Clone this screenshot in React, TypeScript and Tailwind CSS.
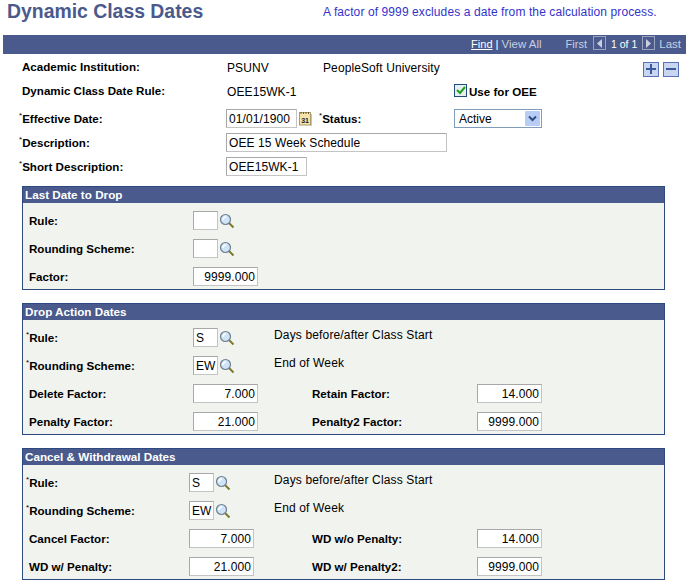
import type { ReactNode } from 'react'

function Lookup() {
  return (
    <svg width="16" height="16" viewBox="0 0 16 16" className="shrink-0">
      <line x1="10" y1="10" x2="14.5" y2="14.5" stroke="#7d7a2c" strokeWidth="2" />
      <circle cx="6.5" cy="6.5" r="5" fill="#cfe4f7" stroke="#6f7f8f" strokeWidth="1.2" />
      <path d="M4 7 A3 3 0 0 1 7 4" fill="none" stroke="#ffffff" strokeWidth="1.4" />
    </svg>
  )
}

function CalendarIcon() {
  return (
    <svg width="13" height="15" viewBox="0 0 13 15" className="shrink-0">
      <rect x="0.5" y="1.5" width="11" height="12.5" fill="#f5e3ac" stroke="#a89a6a" />
      <line x1="12.5" y1="3" x2="12.5" y2="15" stroke="#c8c4b0" />
      <path d="M2 1V3M4.5 1V3M7 1V3M9.500 1V3" stroke="#6b5a2a" />
      <text x="2.2" y="11.500" fontSize="7" fontWeight="700" fill="#222" fontFamily="Liberation Sans, sans-serif">31</text>
    </svg>
  )
}

function Field({ value = '', className, right }: { value?: string; className: string; right?: boolean }) {
  return (
    <div
      className={`h-[19px] shrink-0 bg-white border border-[#c4c4c4] border-t-[#a8a8a8] border-l-[#a8a8a8] px-[2px] flex items-center text-[12px] tracking-[0.1px] text-black whitespace-nowrap overflow-hidden ${right ? 'justify-end' : ''} ${className}`}
    >
      {value}
    </div>
  )
}

function Label({ children, className = '' }: { children: ReactNode; className?: string }) {
  return <div className={`shrink-0 font-bold text-[11.6px] text-black whitespace-nowrap ${className}`}>{children}</div>
}

function Req({ children, className = '' }: { children: ReactNode; className?: string }) {
  return (
    <Label className={className}>
      <span className="font-normal text-[8px] align-top">*</span>
      {children}
    </Label>
  )
}

function Section({ title, children, className = '' }: { title: string; children: ReactNode; className?: string }) {
  return (
    <section className={`ml-[22px] w-[643px] border border-[#2c4a80] bg-[#f1f3ef] ${className}`}>
      <h2 className="h-[16px] bg-[#4a5a8c] pl-[2px] text-[11.7px] leading-[16px] font-bold text-white">{title}</h2>
      <div className="flex flex-col gap-[9px] pt-[8px] pb-[3px] pl-[6px]">{children}</div>
    </section>
  )
}

function Row({ children }: { children: ReactNode }) {
  return <div className="h-[19px] flex items-center">{children}</div>
}

function LookupRow({ label, value, required, labelClass, descClass = '', desc }: { label: string; value?: string; required?: boolean; labelClass: string; descClass?: string; desc?: string }) {
  return (
    <Row>
      {required ? <Req className={labelClass}>{label}</Req> : <Label className={labelClass}>{label}</Label>}
      <Field value={value} className="w-[25px]" />
      <div className="ml-[1px]"><Lookup /></div>
      {desc && <div className={`-mt-[6px] text-[12px] tracking-[0.15px] whitespace-nowrap ${descClass}`}>{desc}</div>}
    </Row>
  )
}

function FactorRow({ left, leftValue, right, rightValue, leftClass, rightClass }: { left: string; leftValue: string; right: string; rightValue: string; leftClass: string; rightClass: string }) {
  return (
    <Row>
      <Label className={leftClass}>{left}</Label>
      <Field value={leftValue} right className="w-[65px]" />
      <Label className={rightClass}>{right}</Label>
      <Field value={rightValue} right className="w-[65px]" />
    </Row>
  )
}

export default function App() {
  return (
    <div className="w-[690px] h-[586px] bg-white overflow-hidden text-[12px] text-black font-['Liberation_Sans',Arial,sans-serif]">
      <div className="h-[35px] flex pl-[7px]">
        <h1 className="w-[316px] text-[19.400px] leading-[22px] font-bold text-[#4a5a8c] whitespace-nowrap">Dynamic Class Dates</h1>
        <p className="pt-[5px] text-[#3333cc] text-[12px] leading-[14px] tracking-[0.1px] whitespace-nowrap">A factor of 9999 excludes a date from the calculation process.</p>
      </div>

      <div className="ml-[3px] w-[683px] h-[19px] bg-[#4a5a8c] flex items-center justify-end pr-[5px] text-[11.500px] text-[#c9cfe0] whitespace-nowrap">
        <a className="text-[11px] text-white underline">Find</a>
        <span className="mx-[3px] text-white">|</span>
        <span>View All</span>
        <span className="ml-[24px] text-[11px]">First</span>
        <button className="ml-[6px] mb-[3px] w-[13px] h-[14px] border border-[#9aa3bf] flex items-center justify-center">
          <svg width="7" height="9" viewBox="0 0 7 9"><path d="M6 0V9L1 4.500Z" fill="#c9cfe0" /></svg>
        </button>
        <span className="ml-[5px] text-[10.500px] text-white">1 of 1</span>
        <button className="ml-[5px] mb-[3px] w-[13px] h-[14px] border border-[#9aa3bf] flex items-center justify-center">
          <svg width="7" height="9" viewBox="0 0 7 9"><path d="M1 0V9L6 4.500Z" fill="#c9cfe0" /></svg>
        </button>
        <span className="ml-[4px]">Last</span>
      </div>

      {/* Header fields */}
      <div className="h-[24px] mt-[2px] flex items-center pl-[22px]">
        <Label className="w-[205px] -mt-[2px]">Academic Institution:</Label>
        <div className="w-[96px] tracking-[0.1px]">PSUNV</div>
        <div className="w-[320px] tracking-[0.1px]">PeopleSoft University</div>
        <button className="mt-[2px] w-[16px] h-[15px] bg-[#c9d6f2] border border-[#5a72b8] flex items-center justify-center">
          <svg width="10" height="10" viewBox="0 0 10 10"><path d="M5 0V10M0 5H10" stroke="#3a5a9c" strokeWidth="2" /></svg>
        </button>
        <button className="mt-[2px] ml-[4px] w-[16px] h-[15px] bg-[#c9d6f2] border border-[#5a72b8] flex items-center justify-center">
          <svg width="10" height="10" viewBox="0 0 10 10"><path d="M0 5H10" stroke="#3a5a9c" strokeWidth="2" /></svg>
        </button>
      </div>
      <div className="h-[24px] flex items-center pl-[22px]">
        <Label className="w-[205px] -mt-[2px]">Dynamic Class Date Rule:</Label>
        <div className="w-[227px] tracking-[0.1px]">OEE15WK-1</div>
        <div className="w-[13px] h-[13px] -mt-[4px] border border-[#1f4e79] bg-[#e9eef0] flex items-center justify-center">
          <svg width="10" height="9" viewBox="0 0 10 9"><path d="M1 4L4 7L9 1" fill="none" stroke="#1ea01e" strokeWidth="2" /></svg>
        </div>
        <Label className="ml-[2px]">Use for OEE</Label>
      </div>
      <div className="mt-[5px] h-[19px] flex items-center pl-[19px]">
        <Req className="w-[207px]">Effective Date:</Req>
        <Field value="01/01/1900" className="w-[71px]" />
        <div className="ml-[2px]"><CalendarIcon /></div>
        <Req className="ml-[7px] w-[135px]">Status:</Req>
        <div className="w-[88px] h-[19px] border border-[#7f9db9] bg-white flex items-center justify-between pl-[4px] pr-[1px]">
          <span>Active</span>
          <span className="w-[15px] h-[15px] bg-[#b7cdf5] flex items-center justify-center rounded-[1px]">
            <svg width="9" height="7" viewBox="0 0 9 7"><path d="M1 1.500L4.500 5L8 1.500" fill="none" stroke="#2f4d80" strokeWidth="2" /></svg>
          </span>
        </div>
      </div>
      <div className="mt-[5px] h-[19px] flex items-center pl-[19px]">
        <Req className="w-[207px]">Description:</Req>
        <Field value="OEE 15 Week Schedule" className="w-[221px]" />
      </div>
      <div className="mt-[5px] h-[19px] flex items-center pl-[19px]">
        <Req className="w-[207px]">Short Description:</Req>
        <Field value="OEE15WK-1" className="w-[81px]" />
      </div>

      <Section title="Last Date to Drop" className="mt-[10px]">
        <LookupRow label="Rule:" labelClass="w-[164px]" />
        <LookupRow label="Rounding Scheme:" labelClass="w-[164px]" />
        <Row>
          <Label className="w-[164px]">Factor:</Label>
          <Field value="9999.000" right className="w-[65px]" />
        </Row>
      </Section>

      <Section title="Drop Action Dates" className="mt-[13px]">
        <LookupRow label="Rule:" value="S" required labelClass="-ml-[3px] w-[167px]" descClass="ml-[39px]" desc="Days before/after Class Start" />
        <LookupRow label="Rounding Scheme:" value="EW" required labelClass="-ml-[3px] w-[167px]" descClass="ml-[39px]" desc="End of Week" />
        <FactorRow left="Delete Factor:" leftValue="7.000" right="Retain Factor:" rightValue="14.000" leftClass="w-[164px]" rightClass="ml-[54px] w-[165px]" />
        <FactorRow left="Penalty Factor:" leftValue="21.000" right="Penalty2 Factor:" rightValue="9999.000" leftClass="w-[164px]" rightClass="ml-[54px] w-[165px]" />
      </Section>

      <Section title="Cancel & Withdrawal Dates" className="mt-[13px]">
        <LookupRow label="Rule:" value="S" required labelClass="-ml-[3px] w-[163px]" descClass="ml-[43px]" desc="Days before/after Class Start" />
        <LookupRow label="Rounding Scheme:" value="EW" required labelClass="-ml-[3px] w-[163px]" descClass="ml-[43px]" desc="End of Week" />
        <FactorRow left="Cancel Factor:" leftValue="7.000" right="WD w/o Penalty:" rightValue="14.000" leftClass="w-[160px]" rightClass="ml-[58px] w-[165px]" />
        <FactorRow left="WD w/ Penalty:" leftValue="21.000" right="WD w/ Penalty2:" rightValue="9999.000" leftClass="w-[160px]" rightClass="ml-[58px] w-[165px]" />
      </Section>
    </div>
  )
}
